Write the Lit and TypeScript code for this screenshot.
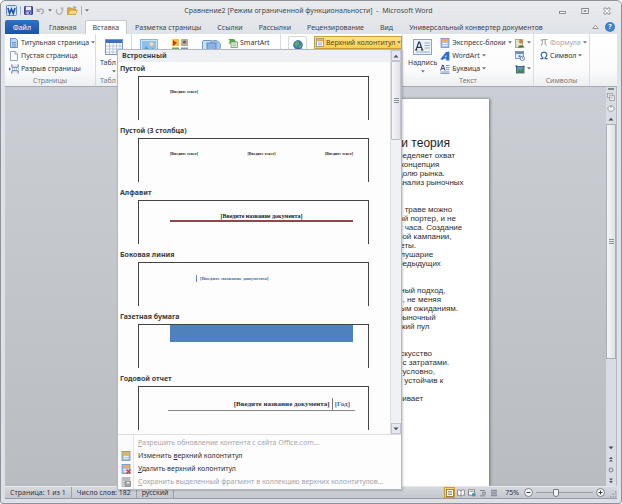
import { LitElement, html, css, svg, nothing, TemplateResult } from "lit";
import { customElement, state } from "lit/decorators.js";

const icon = (w: number, h: number, body: unknown) => html`<svg
  width=${w} height=${h} viewBox="0 0 ${w} ${h}" aria-hidden="true">${body}</svg>`;

const caret = html`<svg class="caret" width="4" height="3" viewBox="0 0 4 3" aria-hidden="true">
  <path d="M0 0.3h4L2 2.6z" fill="#6b7076"/></svg>`;

const blockIcon = (dim = false) => svg`
  <rect x="1" y=".5" width="8" height="9" fill=${dim ? "#d5d5d5" : "#a9c4e4"} stroke=${dim ? "#aaa" : "#6487b3"} stroke-width=".7"/>
  <rect x="2" y="1" width="6" height="3" fill=${dim ? "#bbb" : "#f4ad4d"}/>
  <path d="M2.5 5.5h5M2.5 7.3h5" stroke=${dim ? "#999" : "#fff"} stroke-width=".8"/>`;

const icons: Record<string, TemplateResult> = {
  word: icon(11, 11, svg`<rect x=".5" y=".5" width="10" height="10" rx="1" fill="#d6e5f7" stroke="#5c89c6"/>
    <path d="M2 3l1.6 5.4L5.5 4l1.8 4.4L9 3" fill="none" stroke="#1c54a8" stroke-width="1.6"/>`),
  save: icon(9, 9, svg`<rect x=".5" y=".5" width="8" height="8" rx=".6" fill="#5560c4" stroke="#3a3f98"/>
    <rect x="2" y=".6" width="5" height="3.6" fill="#eef1fb"/><rect x="2.4" y="5.6" width="4.2" height="3" fill="#b9c0dc"/>
    <rect x="4.8" y="6" width="1.2" height="2" fill="#343a80"/>`),
  undo: icon(9, 8, svg`<path d="M2.2 3.4C4 1.4 7.4 1.6 7.4 4.2 7.4 5.8 6.4 6.6 5 7.2" fill="none" stroke="#a3a8b0" stroke-width="1.4"/>
    <path d="M.6 1v4h4z" fill="#a3a8b0"/>`),
  redo: icon(9, 8, svg`<path d="M2 2.2C.4 5 2 7.2 4.2 7.2 6.8 7.2 8 4.6 6.6 2.4" fill="none" stroke="#b0b4bb" stroke-width="1.4"/>
    <path d="M4.8.4h3.6v3.4z" fill="#b0b4bb"/>`),
  open: icon(11, 9, svg`<path d="M.6 8.4V1.8h3l1 1h4v5.6z" fill="#e0a83b" stroke="#b98326" stroke-width=".6"/>
    <path d="M.8 8.4L3 4.2h7.6L8.6 8.4z" fill="#fbdc83" stroke="#c4912f" stroke-width=".6"/>
    <path d="M6 1.6C7 .4 8.6.6 9.2 2" fill="none" stroke="#4877bd" stroke-width=".9"/>`),
  cover: icon(10, 10, svg`<path d="M1.5.5h5l2 2v7h-7z" fill="#b9d6f2" stroke="#4d7fb8" stroke-width=".8"/>
    <path d="M3 4.5h4M3 6.2h4M3 8h4" stroke="#5588c0" stroke-width=".8"/>`),
  blank: icon(10, 10, svg`<path d="M1.5.5h4.6l2.4 2.4v6.6h-7z" fill="#fff" stroke="#7d8fa8" stroke-width=".8"/>
    <path d="M6 .6v2.5h2.4" fill="#dce5f0" stroke="#7d8fa8" stroke-width=".7"/>`),
  brk: icon(10, 10, svg`<path d="M2.8.3v3h6.4v-3M2.8 9.7v-3h6.4v3" fill="#e4ecf6" stroke="#58749c" stroke-width=".9"/>
    <path d="M0 3.3l2 1.7L0 6.7z" fill="#3466b0"/><path d="M3 5h7" stroke="#3466b0" stroke-width=".8" stroke-dasharray="1 1"/>`),
  table: icon(18, 16, svg`<rect x=".5" y=".5" width="17" height="15" fill="#fff" stroke="#7895c2"/>
    <rect x="1" y="1" width="16" height="3" fill="#3f6fc0"/>
    <path d="M1 7h16M1 10h16M1 13h16M4.5 4v11M8 4v11M11.500 4v11M15 4v11" stroke="#9db3d6" stroke-width=".7"/>`),
  picture: icon(18, 16, svg`<rect x=".5" y=".5" width="17" height="15" fill="#cfe5f8" stroke="#8db4d8"/>
    <rect x="2" y="2" width="14" height="12" fill="#8cc0ec"/><circle cx="11.500" cy="5" r="2" fill="#fbd9a0"/>
    <path d="M2 14l4-7 4 4 3-2 3 5z" fill="#5f9cd6"/>`),
  clip: icon(18, 16, svg`<rect x="1" y="0" width="7" height="7" fill="#f3c04c"/><path d="M2 1l4 3-4 3z" fill="#c03b2b"/>
    <rect x="10" y="0" width="7" height="7" fill="#b7aca2"/><circle cx="13.500" cy="3" r="1.6" fill="#7a5c46"/>
    <rect x="1" y="8.500" width="7" height="7" fill="#79a860"/><rect x="10" y="8.500" width="7" height="7" fill="#7f94b8"/>`),
  shapes: icon(20, 16, svg`<rect x=".5" y="1.500" width="10" height="10" rx="1.500" fill="#cfe1f5" stroke="#6c98cd"/>
    <circle cx="13" cy="7" r="5.500" fill="#a9c9ee" stroke="#6c98cd"/><rect x="5" y="4" width="9" height="9" fill="#8bb4e3" stroke="#5b88c0"/>`),
  smart: icon(10, 10, svg`<path d="M.4 1h5.4L8 3.2 5.800 5.400H.4l1.500-2.200z" fill="#56a845"/>
    <rect x="3" y="4" width="6.500" height="5.500" fill="#eaf4e6" stroke="#6f9c62" stroke-width=".8"/><path d="M4.300 6h4M4.300 7.800h4" stroke="#89a681" stroke-width=".7"/>`),
  globe: icon(12, 12, svg`<circle cx="6" cy="5" r="4.400" fill="#3f7fc4" stroke="#2b5f9c" stroke-width=".7"/>
    <path d="M3.500 2c2-1 3 0 3.500 1.500S5 5 4.600 6.500 3 5 2.400 4.500zM7.500 5.500l2.300-.8c0 1.800-1.200 3.300-2.300 3.800z" fill="#61b04e"/>
    <path d="M5 9.500h6" stroke="#444b55" stroke-width="1.600"/>`),
  header: icon(8, 9, svg`<rect x=".5" y=".5" width="7" height="8" fill="#fff" stroke="#7c8ba3" stroke-width=".8"/>
    <rect x="1.200" y="1.200" width="5.600" height="2.200" fill="#ee9a45"/><path d="M2 5h4M2 6.700h4" stroke="#7f97bb" stroke-width=".8"/>`),
  textbox: icon(19, 16, svg`<rect x=".5" y=".5" width="18" height="15" fill="#eef3fa" stroke="#8fa2bd"/>
    <path d="M3 11L5.800 3h.8L9.400 11M4.400 8.400h3.500M2 11h2.500M7.800 11h2.600" fill="none" stroke="#27364f" stroke-width="1.200"/>
    <path d="M11.500 4h5.500M11.500 6.500h5.500M11.500 9h5.500M3 13h14" stroke="#86a5cf" stroke-width=".9"/>`),
  quick: icon(10, 10, blockIcon()),
  wordart: icon(10, 10, svg`<path d="M.3 8.200L6 1l3.400-.6V9.400H6.200V7.500L4 7.800 2.600 9z" fill="#2f6fd0"/>
    <path d="M6.300 3.500v2.600L4.600 6.200z" fill="#dce9fb"/>`),
  dropcap: icon(10, 10, svg`<path d="M.6 6.500L2.600 1h.5L5 6.500M1.400 4.700h2.900" fill="none" stroke="#33415a" stroke-width="1"/>
    <path d="M6 1.500h3.600M6 3.600h3.600M6 5.700h3.600M.5 8h9M.5 9.600h9" stroke="#5c78a8" stroke-width=".8"/>`),
  sign: icon(10, 10, svg`<rect x=".5" y="1.500" width="7" height="8" fill="#e6e0cf" stroke="#8f8a7b" stroke-width=".7"/>
    <circle cx="6" cy="3.400" r="2" fill="#c8863a"/><path d="M3 9.500c0-3 6-3 6.500 0z" fill="#4c7a40"/>`),
  date: icon(10, 10, svg`<rect x=".5" y=".5" width="8" height="7" fill="#e8f0fa" stroke="#5f85b9" stroke-width=".8"/>
    <path d="M1 2h7" stroke="#3d6db4" stroke-width="1.400"/><path d="M3.500 4.300h2v2h-2z" fill="#6a7890"/>
    <circle cx="7.400" cy="7.400" r="2.200" fill="#fff" stroke="#486ea8" stroke-width=".8"/><path d="M7.400 6v1.500h1" fill="none" stroke="#486ea8" stroke-width=".6"/>`),
  object: icon(10, 10, svg`<path d="M.2 2l1.500.6V1M8.800 1.500v2" fill="none" stroke="#2d6cb8" stroke-width="1"/>
    <rect x="1.500" y="2.500" width="7.500" height="6.500" fill="#5a9cc9" stroke="#3f4b5c" stroke-width=".8"/>
    <path d="M2 8.600l2-3.600 2 2 1.500-3.200L8.600 8.600z" fill="#3f8d35"/>`),
  pi: icon(8, 9, svg`<path d="M.6 2.400C1.400 1.200 2 1.500 7.400 1.500M2.600 1.800C2.600 5 2.200 6.500 1.200 7.600M5.200 1.800c-.2 3.500-.2 5.400 1.600 5.400" fill="none" stroke="#a2a6ac" stroke-width="1.100"/>`),
  omega: icon(8, 9, svg`<path d="M.4 7.600h2.400V6.700C.2 4.900.8 1.200 4 1.200s3.800 3.700 1.200 5.500v.9h2.400" fill="none" stroke="#2c62b5" stroke-width="1.200"/>`),
  edit: icon(10, 10, blockIcon()),
  remove: icon(10, 10, svg`${blockIcon()}<path d="M5.500 5.500l4 4M9.500 5.500l-4 4" stroke="#e23d28" stroke-width="1.400"/>`),
  store: icon(10, 10, svg`${blockIcon(true)}<rect x="4.500" y="4.500" width="5" height="5" fill="#a5a5a5" stroke="#888" stroke-width=".7"/><rect x="5.800" y="4.800" width="2.400" height="1.700" fill="#eee"/>`),
  min: icon(8, 8, svg`<rect x=".5" y="4.500" width="6" height="2" fill="#fff" stroke="#777b82" stroke-width=".8"/>`),
  max: icon(8, 8, svg`<rect x=".8" y="1.500" width="6.500" height="5" fill="#fff" stroke="#777b82" stroke-width=".9"/><rect x="3" y="3.300" width="2" height="1.400" fill="none" stroke="#777b82" stroke-width=".7"/>`),
  close: icon(8, 8, svg`<path d="M1 1h2l1 1.500L5 1h2v1.500L5.500 4 7 5.500V7H5L4 5.500 3 7H1V5.500L2.500 4 1 2.500z" fill="#fff" stroke="#777b82" stroke-width=".8"/>`),
  collapse: icon(7, 6, svg`<path d="M.8 4.500L3.500 1.200l2.700 3.300z" fill="#fff" stroke="#7e838b" stroke-width=".8"/>`),
  ruler: icon(8, 8, svg`<rect x=".5" y=".5" width="5" height="4" fill="#f3f3f5" stroke="#8b8f98" stroke-width=".7"/><rect x="2.800" y="2.800" width="4.600" height="4.600" fill="#eee" stroke="#8b8f98" stroke-width=".7"/><path d="M1.500 2h2M4 5h2" stroke="#b08080" stroke-width=".7"/>`),
  hand: icon(8, 8, svg`<path d="M1 3.500C1 1.500 7 1.500 7 3.500V5C7 8 1 8 1 5z" fill="#f4f5f7" stroke="#8b8f98" stroke-width=".8"/><path d="M4 1v3" stroke="#8b8f98" stroke-width=".8"/>`),
  up: icon(6, 4, svg`<path d="M.5 3.500L3 .7l2.500 2.800z" fill="#4a4e55"/>`),
  down: icon(6, 4, svg`<path d="M.5.5L3 3.300 5.500.5z" fill="#4a4e55"/>`),
  upup: icon(6, 6, svg`<path d="M1 3L3 .8 5 3zM1 5.600L3 3.400l2 2.200z" fill="#5a5e66"/>`),
  dndn: icon(6, 6, svg`<path d="M1 .5L3 2.700 5 .5zM1 3.100l2 2.200 2-2.200z" fill="#5a5e66"/>`),
  ring: icon(6, 6, svg`<circle cx="3" cy="3" r="2" fill="none" stroke="#7b8088"/>`),
  vPrint: icon(8, 8, svg`<rect x=".5" y=".5" width="7" height="7" fill="#fffdf2" stroke="#7a6b3d" stroke-width=".8"/><path d="M2 2.500h4M2 4h4M2 5.500h4" stroke="#7a7560" stroke-width=".7"/>`),
  vRead: icon(8, 8, svg`<path d="M4 1.800C3 .8 1.500.8.600 1.200v5.200C2 6 3 6.200 4 7.200 5 6.200 6 6 7.400 6.400V1.200C6.500.8 5 .8 4 1.800zV7" fill="#fff" stroke="#70757d" stroke-width=".8"/>`),
  vWeb: icon(8, 8, svg`<rect x=".5" y=".8" width="6" height="5.400" fill="#fff" stroke="#70757d" stroke-width=".8"/><path d="M1.500 2.500h4" stroke="#70757d" stroke-width=".7"/><circle cx="5.800" cy="5.600" r="1.900" fill="#4e93a6"/>`),
  vOutline: icon(8, 8, svg`<path d="M1 1.500h5M3 3.300h4M3 5h4M1 6.800h5" stroke="#70757d" stroke-width=".8"/>`),
  vDraft: icon(8, 8, svg`<path d="M1 1.300h6M1 3.100h6M1 4.900h6M1 6.700h6" stroke="#70757d" stroke-width=".9"/>`),
  grip: icon(7, 7, svg`<path d="M5 0h1.500v1.500H5zM5 2.500h1.500V4H5zM2.500 2.500H4V4H2.500zM5 5h1.500v1.500H5zM2.500 5H4v1.500H2.500zM0 5h1.500v1.500H0z" fill="#a0a5ad"/>`),
};

const tabs = ["Главная", "Вставка", "Разметка страницы", "Ссылки", "Рассылки",
  "Рецензирование", "Вид", "Универсальный конвертер документов"];

const prompt = "[Введите текст]";
const titlePrompt = "[Введите название документа]";

const gallery: { name: string; body: TemplateResult }[] = [
  { name: "Пустой", body: html`<span class="three"><span>${prompt}</span></span>` },
  { name: "Пустой (3 столбца)", body: html`<span class="three"><span>${prompt}</span><span>${prompt}</span><span>${prompt}</span></span>` },
  { name: "Алфавит", body: html`<span class="alphabet">${titlePrompt}</span>` },
  { name: "Боковая линия", body: html`<span class="side"><span>${titlePrompt}</span></span>` },
  { name: "Газетная бумага", body: html`<span class="news"></span>` },
  { name: "Годовой отчет", body: html`<span class="annual"><span>${titlePrompt}</span><span class="year">[Год]</span></span>` },
];

const commands = [
  { key: "Р", before: "", after: "азрешить обновление контента с сайта Office.com...", icon: "", off: true },
  { key: "в", before: "Изменить ", after: "ерхний колонтитул", icon: "edit", off: false },
  { key: "У", before: "", after: "далить верхний колонтитул", icon: "remove", off: false },
  { key: "С", before: "", after: "охранить выделенный фрагмент в коллекцию верхних колонтитулов...", icon: "store", off: true },
];

const paragraphs = [
  ["ределяет охват", " концепция", "долю рынка.", "анализ рыночных"],
  ["   траве можно", "ый портер, и не", "2 часа. Создание", "ной кампании,", " еты.", " лушарие", "редыдущих"],
  [" ный подход,", "  , не меняя", " ым ожиданиям.", "рыночный", "ский пул"],
  [" скусство", "  с затратами.", "  условно,", "у устойчив к", "", "чивает"],
];

@customElement("header-gallery")
class HeaderGallery extends LitElement {
  static styles = css`
    :host { display: block; background: #fdfdfe; border: 1px solid #b4b8c4; box-sizing: border-box;
      box-shadow: 1px 1px 2px #0003; color: #2f3136; }
    button { font: inherit; color: inherit; border: 0; background: none; padding: 0; margin: 0; text-align: left; }
    svg { display: block; }
    .body { display: flex; }
    .list { flex: 1; min-width: 0; }
    h2 { margin: 0; font-size: 7px; line-height: 12px; padding-left: 4px; background: #eef0f4; color: #3b3f46; }
    .entry { display: flex; flex-direction: column; justify-content: flex-start; width: 100%; height: 62px; }
    .name { padding-left: 2px; font-weight: 700; line-height: 14px; color: #3b3b3b; }
    .sheet { display: block; align-self: stretch; box-sizing: border-box; height: 44px; margin: 0 21px 0 20px; padding: 0 15px 0 31px;
      border: solid #444; border-width: 1px 1px 0 1px; font-family: "Liberation Serif", serif; font-weight: 700; white-space: nowrap; }
    .three { display: flex; justify-content: space-between; padding-top: 12px; font-size: 4px; line-height: 6px; color: #222; }
    .alphabet { display: block; padding-top: 11px; font-size: 6px; line-height: 8px; text-align: center; border-bottom: 2px solid #8a4a4a; color: #222; }
    .side { display: inline-flex; margin: 12px 0 0 26px; padding-left: 3px; border-left: 1px solid #5b8ac6; font-size: 5px; line-height: 7px; color: #4a6c9c; vertical-align: top; }
    .news { display: block; height: 17px; background: #4f81bd; }
    .annual { display: flex; justify-content: flex-end; margin: 11px -2px 0; font-size: 7px; line-height: 12px; border-bottom: 1px solid #888; color: #333; }
    .year { margin-left: 2px; padding: 0 5px 0 2px; border-left: 1px solid #777; color: #3f6593; }
    .bar { width: 10px; display: flex; flex-direction: column; background: #f0f1f4; border-left: 1px solid #dcdee4; }
    .bar button { height: 11px; display: grid; place-items: center; background: #e6e8ef; border: 1px solid #c3c6d0; }
    .rail { flex: 1; }
    .thumb { height: 79px; box-sizing: border-box; border: 1px solid #bfc2cb; border-radius: 1px;
      background: linear-gradient(90deg, #f7f7f9, #dfe1e7); display: grid; place-items: center; }
    .lines { width: 5px; height: 5px; background: repeating-linear-gradient(#8b8f98 0 1px, transparent 1px 2px); }
    .commands { border-top: 1px solid #dcdee3; background: linear-gradient(90deg, #fbfbfc 15px, #e2e4e8 15px 16px, #fdfdfe 16px); padding: 1px 0; }
    .command { display: flex; align-items: center; width: 100%; height: 13px; white-space: nowrap; }
    .command:disabled { color: #a4a6aa; }
    .slot { width: 20px; padding-left: 3px; box-sizing: border-box; }
  `;

  render() {
    return html`
      <div class="body">
        <div class="list">
          <h2>Встроенный</h2>
          ${gallery.map((g) => html`<button class="entry"><span class="name">${g.name}</span><span class="sheet">${g.body}</span></button>`)}
        </div>
        <div class="bar">
          <button aria-label="Вверх">${icons.up}</button>
          <div class="rail"><div class="thumb"><div class="lines"></div></div></div>
          <button aria-label="Вниз">${icons.down}</button>
        </div>
      </div>
      <div class="commands">
        ${commands.map((c) => html`<button class="command" ?disabled=${c.off}><span class="slot">${c.icon ? icons[c.icon] : nothing}</span><span>${c.before}<u>${c.key}</u>${c.after}</span></button>`)}
      </div>`;
  }
}

@customElement("app-root")
class AppRoot extends LitElement {
  @state() private tab = "Вставка";

  static styles = css`
    :host { display: flex; flex-direction: column; box-sizing: border-box; min-height: 100vh; position: relative;
      font: 7px/9px "Noto Sans", "Open Sans", sans-serif; color: #33373d; overflow: hidden; white-space: nowrap;
      background: linear-gradient(#e9ebee, #dfe2e7 34px, #dde1e7); border: 1px solid #8d929b; border-radius: 5px 5px 3px 3px; padding: 0 4px 4px; }
    button { font: inherit; color: inherit; border: 0; background: none; padding: 0; margin: 0; }
    svg { display: block; flex: none; }
    .title { display: flex; align-items: center; height: 19px; }
    .quick { flex: 1; display: flex; align-items: center; gap: 3px; padding-left: 1px; }
    .rule { width: 1px; height: 9px; background: #aeb2b9; }
    .title h1 { margin: 0; font-size: 7px; font-weight: 400; color: #45494f; white-space: pre; }
    .wctl { flex: 1; display: flex; justify-content: flex-end; gap: 14px; padding-right: 6px; }
    .tabs { display: flex; height: 14px; align-items: stretch; }
    .tab { padding: 0 7px; color: #41454b; border: 1px solid transparent; border-bottom: 0; }
    .tab.on { background: #fff; border-color: #c2c6cd; border-radius: 2px 2px 0 0; }
    .file { width: 34px; margin-right: 2px; color: #fff; background: linear-gradient(#2f70c8, #1a54ab); border-radius: 2px 2px 0 0; }
    .help { margin-left: auto; display: flex; align-items: center; gap: 6px; padding-right: 2px; }
    .help .q { width: 10px; height: 10px; border-radius: 5px; color: #fff; background: #3d7fd0; font-weight: 700; line-height: 10px; }
    .ribbon { display: flex; height: 53px; box-sizing: border-box; background: linear-gradient(#fff, #fbfbfc 70%, #eceef1); border-bottom: 1px solid #a7abb2; }
    .group { flex: none; display: flex; flex-direction: column; box-sizing: border-box; padding-top: 2px; border-right: 1px solid #d9dce1; }
    .tools { flex: 1; display: flex; }
    .group footer { line-height: 11px; text-align: center; color: #767b83; }
    .col { display: flex; flex-direction: column; }
    .tool { display: flex; align-items: center; gap: 2px; height: 13px; }
    .tool:disabled { color: #a2a6ac; }
    .big { display: flex; flex-direction: column; align-items: center; align-self: flex-start; gap: 3px; padding-top: 3px; }
    .pages { width: 91px; } .pages .col { padding-left: 4px; }
    .tables { width: 36px; }
    .tables .tools, .tables footer { padding-left: 4px; }
    .tables footer { text-align: left; }
    .tables .big { align-items: flex-start; }
    .tables .big > :first-child { margin-left: 5px; }
    .tables .caret { margin-left: 12px; }
    .pics { width: 149px; }
    .pics .tools { gap: 13px; padding-left: 8px; }
    .pics .col { margin-left: -7px; }
    .links { width: 33px; align-items: center; border-right: 0; }
    .links button { display: grid; place-items: center; width: 19px; height: 20px; border: 1px solid #d5d8dd; border-radius: 2px; }
    .heads { width: 89px; }
    .heads .tool { width: 88px; box-sizing: border-box; padding: 0 1px; border: 1px solid #c9a03b; background: linear-gradient(#fde28a, #fcd04f); color: #5c4716; }
    .text { width: 131px; } .text .tools { padding-left: 5px; gap: 3px; }
    .text .side { margin-left: auto; padding-right: 3px; }
    .signs { width: 56px; } .signs .col { padding-left: 6px; }
    .work { flex: 1; display: flex; background: linear-gradient(#cbcfd5, #b9bdc2); }
    .desk { flex: 1; display: flex; justify-content: center; padding-top: 12px; }
    .page { box-sizing: border-box; width: 367px; padding: 37px 0 0 276px; background: #fff; box-shadow: 1px 0 3px #6b6f75; color: #2e2e2e; font: 8px/9px "Liberation Sans", sans-serif; white-space: pre; }
    .page h3 { margin: 0; font-size: 12px; line-height: 15px; font-weight: 400; color: #1c1c1c; }
    .page p { margin: 0 0 18px; } .line { min-height: 9px; }
    .scroll { width: 10px; display: flex; flex-direction: column; align-items: center; background: #d8dce3; border-right: 1px solid #b5b9c0; }
    .scroll button { width: 10px; height: 11px; display: grid; place-items: center; }
    .split { width: 6px; height: 2px; margin: 1px 0; background: #82868e; }
    .rail { flex: 1; width: 10px; }
    .thumb { box-sizing: border-box; height: 74%; border: 1px solid #a9adb6; background: linear-gradient(90deg, #f5f6f8, #dfe2e8); display: grid; place-items: center; }
    .lines { width: 5px; height: 5px; background: repeating-linear-gradient(#8b8f98 0 1px, transparent 1px 2px); }
    .status { box-sizing: border-box; display: flex; align-items: stretch; height: 13px; line-height: 12px; border-top: 1px solid #e3e6ea; border-bottom: 1px solid #979ba3; background: linear-gradient(#d6d9de, #c3c7ce); }
    .cell { padding: 0 5px; border-right: 1px solid #9da1a9; }
    .views { margin-left: auto; display: flex; align-items: center; }
    .view { width: 11px; height: 11px; box-sizing: border-box; display: grid; place-items: center; }
    .view.on { outline: 1px solid #d19a27; outline-offset: -1px; background: #fbd565; }
    .zoom { padding: 0 5px 0 6px; }
    .round { width: 9px; height: 9px; display: grid; place-items: center; border: 1px solid #7d8189; border-radius: 5px; background: #f5f6f8; box-sizing: border-box; }
    input { appearance: none; width: 57px; height: 9px; margin: 0 3px; background: linear-gradient(#9a9ea6, #9a9ea6) center / 100% 1px no-repeat; }
    input::-webkit-slider-thumb { appearance: none; width: 6px; height: 8px; border: 1px solid #74787f; border-radius: 1px 1px 3px 3px; background: #f6f7f9; box-sizing: border-box; }
    .resize { align-self: flex-end; margin-left: 5px; }
    header-gallery { position: absolute; left: 116px; top: 48px; width: 285px; }
  `;

  private tool(name: string, label: string, arrow = true, off = false) {
    return html`<button class="tool" ?disabled=${off}>${icons[name]}${label ? html`<span>${label}</span>` : nothing}${arrow ? caret : nothing}</button>`;
  }

  render() {
    const views = ["vPrint", "vRead", "vWeb", "vOutline", "vDraft"];
    return html`
      <header class="title">
        <div class="quick">
          ${icons.word}<i class="rule"></i>
          <button aria-label="Сохранить">${icons.save}</button>
          <button aria-label="Отменить">${icons.undo}</button>${caret}
          <button aria-label="Вернуть">${icons.redo}</button>
          <button aria-label="Открыть">${icons.open}</button>
          <i class="rule"></i>${caret}
        </div>
        <h1>Сравнение2 [Режим ограниченной функциональности]  -  Microsoft Word</h1>
        <div class="wctl">
          <button aria-label="Свернуть">${icons.min}</button>
          <button aria-label="Развернуть">${icons.max}</button>
          <button aria-label="Закрыть">${icons.close}</button>
        </div>
      </header>
      <nav class="tabs">
        <button class="file">Файл</button>
        ${tabs.map((t) => html`<button class="tab ${t === this.tab ? "on" : ""}" @click=${() => (this.tab = t)}>${t}</button>`)}
        <div class="help"><button aria-label="Свернуть ленту">${icons.collapse}</button><button class="q">?</button></div>
      </nav>
      <div class="ribbon">
        <section class="group pages">
          <div class="tools"><div class="col">
            ${this.tool("cover", "Титульная страница")}${this.tool("blank", "Пустая страница", false)}${this.tool("brk", "Разрыв страницы", false)}
          </div></div>
          <footer>Страницы</footer>
        </section>
        <section class="group tables">
          <div class="tools"><button class="big">${icons.table}<span>Табл</span>${caret}</button></div>
          <footer>Табл</footer>
        </section>
        <section class="group pics">
          <div class="tools">
            <button class="big" aria-label="Рисунок">${icons.picture}</button>
            <button class="big" aria-label="Картинка">${icons.clip}</button>
            <button class="big" aria-label="Фигуры">${icons.shapes}</button>
            <div class="col">${this.tool("smart", "SmartArt", false)}</div>
          </div>
        </section>
        <section class="group links"><button aria-label="Гиперссылка">${icons.globe}</button></section>
        <section class="group heads">${this.tool("header", "Верхний колонтитул")}</section>
        <section class="group text">
          <div class="tools">
            <button class="big">${icons.textbox}<span>Надпись</span>${caret}</button>
            <div class="col">${this.tool("quick", "Экспресс-блоки")}${this.tool("wordart", "WordArt")}${this.tool("dropcap", "Буквица")}</div>
            <div class="col side">${this.tool("sign", "")}${this.tool("date", "", false)}${this.tool("object", "")}</div>
          </div>
          <footer>Текст</footer>
        </section>
        <section class="group signs">
          <div class="tools"><div class="col">${this.tool("pi", "Формула", true, true)}${this.tool("omega", "Символ")}</div></div>
          <footer>Символы</footer>
        </section>
      </div>
      <main class="work">
        <div class="desk">
          <article class="page"><h3> и теория</h3>${paragraphs.map((p) => html`<p>${p.map((l) => html`<div class="line">${l}</div>`)}</p>`)}</article>
        </div>
        <div class="scroll">
          <i class="split"></i>
          <button aria-label="Линейка">${icons.ruler}</button>
          <button aria-label="Прокрутка">${icons.hand}</button>
          <button aria-label="Вверх">${icons.up}</button>
          <div class="rail"><div class="thumb"><div class="lines"></div></div></div>
          <button aria-label="Вниз">${icons.down}</button>
          <button aria-label="Предыдущая страница">${icons.upup}</button>
          <button aria-label="Объект перехода">${icons.ring}</button>
          <button aria-label="Следующая страница">${icons.dndn}</button>
        </div>
      </main>
      <footer class="status">
        <span class="cell">Страница: 1 из 1</span><span class="cell">Число слов: 182</span><span class="cell">русский</span>
        <div class="views">
          ${views.map((v, i) => html`<button class="view ${i ? "" : "on"}" aria-label="Режим ${i + 1}">${icons[v]}</button>`)}
          <span class="zoom">75%</span>
          <button class="round" aria-label="Уменьшить">${icon(5, 5, svg`<path d="M.5 2.500h4" stroke="#444"/>`)}</button>
          <input type="range" min="0" max="100" value="33" aria-label="Масштаб">
          <button class="round" aria-label="Увеличить">${icon(5, 5, svg`<path d="M.5 2.500h4M2.500.5v4" stroke="#444"/>`)}</button>
          <span class="resize">${icons.grip}</span>
        </div>
      </footer>
      <header-gallery></header-gallery>`;
  }
}
